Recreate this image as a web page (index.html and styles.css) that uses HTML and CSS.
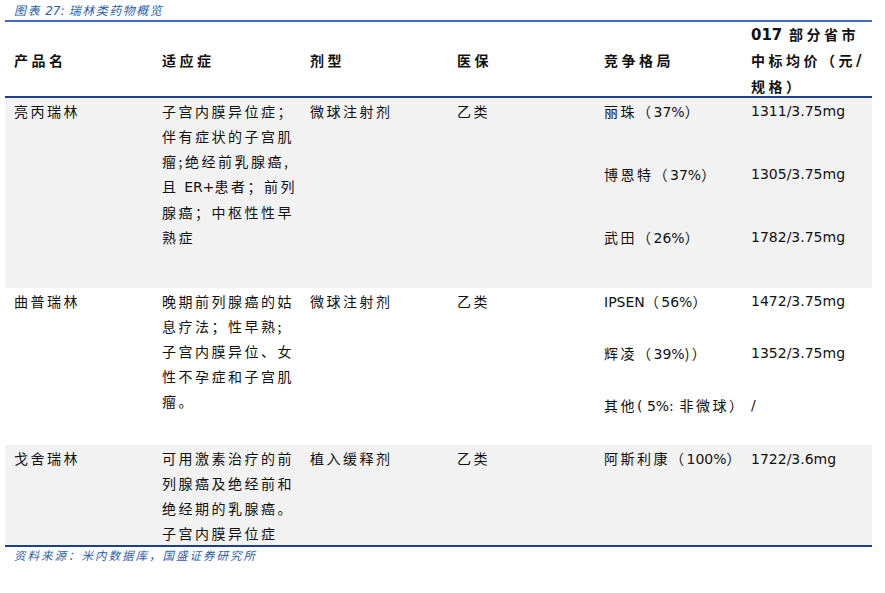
FILE: index.html
```html
<!DOCTYPE html>
<html lang="zh-CN">
<head>
<meta charset="utf-8">
<title>瑞林类药物概览</title>
<link rel="stylesheet" href="styles.css">
</head>
<body>
<div class="page">
  <div class="caption">图表 <span class="n">27:</span> 瑞林类药物概览</div>
  <div class="table">
    <div class="row head">
      <div class="cell mid">产品名</div>
      <div class="cell mid">适应症</div>
      <div class="cell mid">剂型</div>
      <div class="cell mid">医保</div>
      <div class="cell mid">竞争格局</div>
      <div class="cell top"><span class="n">017</span> 部分省市<br>中标均价（元<span class="n">/</span><br>规格）</div>
    </div>
    <div class="row gray r1">
      <div class="cell">亮丙瑞林</div>
      <div class="cell">子宫内膜异位症；<br>伴有症状的子宫肌<br>瘤;绝经前乳腺癌,<br>且 <span class="n">ER+</span>患者；前列<br>腺癌；中枢性性早<br>熟症</div>
      <div class="cell">微球注射剂</div>
      <div class="cell">乙类</div>
      <div class="cell"><div class="item">丽珠（<span class="n">37%</span>）</div><div class="item">博恩特（<span class="n">37%</span>）</div><div class="item">武田（<span class="n">26%</span>）</div></div>
      <div class="cell"><div class="item n">1311/3.75mg</div><div class="item n">1305/3.75mg</div><div class="item n">1782/3.75mg</div></div>
    </div>
    <div class="row r2">
      <div class="cell">曲普瑞林</div>
      <div class="cell">晚期前列腺癌的姑<br>息疗法；性早熟;<br>子宫内膜异位、女<br>性不孕症和子宫肌<br>瘤。</div>
      <div class="cell">微球注射剂</div>
      <div class="cell">乙类</div>
      <div class="cell"><div class="item"><span class="n">IPSEN</span>（<span class="n">56%</span>）</div><div class="item">辉凌（<span class="n">39%</span>)）</div><div class="item">其他<span class="n">( 5%:</span> 非微球）</div></div>
      <div class="cell"><div class="item n">1472/3.75mg</div><div class="item n">1352/3.75mg</div><div class="item n">/</div></div>
    </div>
    <div class="row gray r3">
      <div class="cell">戈舍瑞林</div>
      <div class="cell">可用激素治疗的前<br>列腺癌及绝经前和<br>绝经期的乳腺癌。<br>子宫内膜异位症</div>
      <div class="cell">植入缓释剂</div>
      <div class="cell">乙类</div>
      <div class="cell">阿斯利康（<span class="n">100%</span>）</div>
      <div class="cell"><span class="n">1722/3.6mg</span></div>
    </div>
  </div>
  <div class="source">资料来源：米内数据库，国盛证券研究所</div>
</div>
</body>
</html>
```

FILE: styles.css
```css
html, body {
  margin: 0;
  padding: 0;
  background: #ffffff;
}
body {
  font-family: "Noto Sans CJK SC", sans-serif;
  color: #111111;
}
.page {
  width: 867px;
  padding-left: 5px;
}
.caption {
  height: 20px;
  line-height: 20px;
  padding-left: 9px;
  font-size: 12px;
  font-style: italic;
  color: #2f5ea8;
  letter-spacing: 1.5px;
}
.caption .n {
  font-family: "DejaVu Sans", sans-serif;
  letter-spacing: 0;
}
.table {
  border-top: 2px solid #3f72bd;
  border-bottom: 2px solid #1c3f8e;
}
.row {
  display: grid;
  grid-template-columns: 148px 148px 147px 147px 147px 130px;
  font-size: 14px;
  line-height: 25px;
  letter-spacing: 2.5px;
}
.row.head {
  height: 74px;
  border-bottom: 2px solid #1c3f8e;
  font-weight: bold;
  letter-spacing: 3.5px;
}
.row.head .n {
  font-size: 15px;
}
.row.gray {
  background: #f2f2f2;
}
.cell {
  padding: 1px 0 0 9px;
  white-space: nowrap;
}
.head .cell {
  padding-top: 0;
}
.head .mid {
  display: flex;
  align-items: center;
}
.n {
  font-family: "DejaVu Sans", sans-serif;
  letter-spacing: 0;
}
.r1 {
  height: 190px;
}
.r1 .item {
  height: 63px;
}
.r2 {
  height: 157px;
}
.r2 .item {
  height: 52px;
}
.r3 {
  height: 100px;
}
.source {
  padding-left: 9px;
  height: 16px;
  line-height: 16px;
  font-size: 11.5px;
  font-style: italic;
  color: #2f5ea8;
  letter-spacing: 2px;
}
```
